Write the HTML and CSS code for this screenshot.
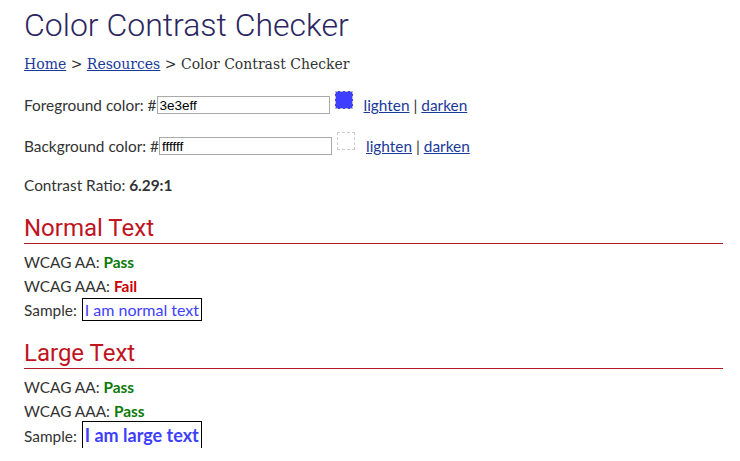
FILE: index.html
```html
<!DOCTYPE html>
<html>
<head>
<meta charset="utf-8">
<link rel="stylesheet" href="styles.css">
</head>
<body>
<main class="page">
  <h1 class="title">Color Contrast Checker</h1>
  <nav class="crumbs"><a href="#">Home</a> &gt; <a href="#">Resources</a> &gt; Color Contrast Checker</nav>

  <div class="color-row fg-row">
    <label class="lbl">Foreground color: #<input class="hex" type="text" value="3e3eff"></label>
    <span class="swatch swatch-fg"></span>
    <span class="tools"><a href="#">lighten</a> | <a href="#">darken</a></span>
  </div>
  <div class="color-row bg-row">
    <label class="lbl">Background color: #<input class="hex" type="text" value="ffffff"></label>
    <span class="swatch swatch-bg"></span>
    <span class="tools"><a href="#">lighten</a> | <a href="#">darken</a></span>
  </div>

  <p class="ratio">Contrast Ratio: <strong>6.29:1</strong></p>

  <section class="block">
    <h2 class="sec">Normal Text</h2>
    <p class="line first">WCAG AA: <strong class="pass">Pass</strong></p>
    <p class="line">WCAG AAA: <strong class="fail">Fail</strong></p>
    <p class="line">Sample: <span class="sample">I am normal text</span></p>
  </section>

  <section class="block block-lg">
    <h2 class="sec">Large Text</h2>
    <p class="line first">WCAG AA: <strong class="pass">Pass</strong></p>
    <p class="line">WCAG AAA: <strong class="pass">Pass</strong></p>
    <p class="line">Sample: <span class="sample sample-lg">I am large text</span></p>
  </section>
</main>
</body>
</html>
```

FILE: styles.css
```css
html, body { margin: 0; padding: 0; background: #fff; }
body {
  font-family: Lato, "Open Sans", sans-serif;
  font-size: 15.4px;
  color: #333;
}
.page { padding: 0 17px 0 24px; }
.title {
  font-family: Roboto, sans-serif;
  font-weight: 300;
  font-size: 32px;
  color: #2b2660;
  margin: 0;
  padding-top: 6px;
  line-height: 38px;
}
.crumbs {
  font-family: "DejaVu Serif", "Liberation Serif", serif;
  font-size: 14px;
  color: #333;
  margin-top: 10px;
  line-height: 20px;
}
a { color: #1a3a9a; }
.color-row { display: flex; align-items: flex-start; }
.fg-row { margin-top: 21px; }
.bg-row { margin-top: 21px; }
.lbl { display: flex; align-items: center; line-height: 20px; }
.hex {
  width: 167px; height: 14px; padding: 1px 2px;
  border: 1px solid #a9a9a9; margin: 0;
  font-family: Arial, "Liberation Sans", sans-serif; font-size: 13.5px; color: #000;
}
.swatch { width: 16px; height: 16px; margin-left: 5px; margin-top: -4px; border: 1px dashed #bbb; }
.swatch-fg { background: #3e3eff; }
.swatch-bg { background: #fff; border-color: #ccc; }
.tools { margin-left: 11px; line-height: 20px; }
.ratio { margin: 19px 0 0; line-height: 20px; }
.sec {
  font-family: Roboto, sans-serif;
  font-weight: 400;
  font-size: 24px;
  color: #c0141f;
  margin: 18px 0 0;
  line-height: 30px;
  border-bottom: 1px solid #b01c24;
}
.block-lg .sec { margin-top: 16px; }
.line { margin: 0; line-height: 24px; }
.line.first { margin-top: 6px; }
.pass { color: #0a7a0a; }
.fail { color: #c00; }
.sample {
  color: #3e3eff; border: 1px solid #000;
  padding: 1px 2px; margin-left: 1px;
  font-size: 16px;
}
.sample-lg { font-size: 18px; font-weight: 700; padding: 2px 2px; }
```
